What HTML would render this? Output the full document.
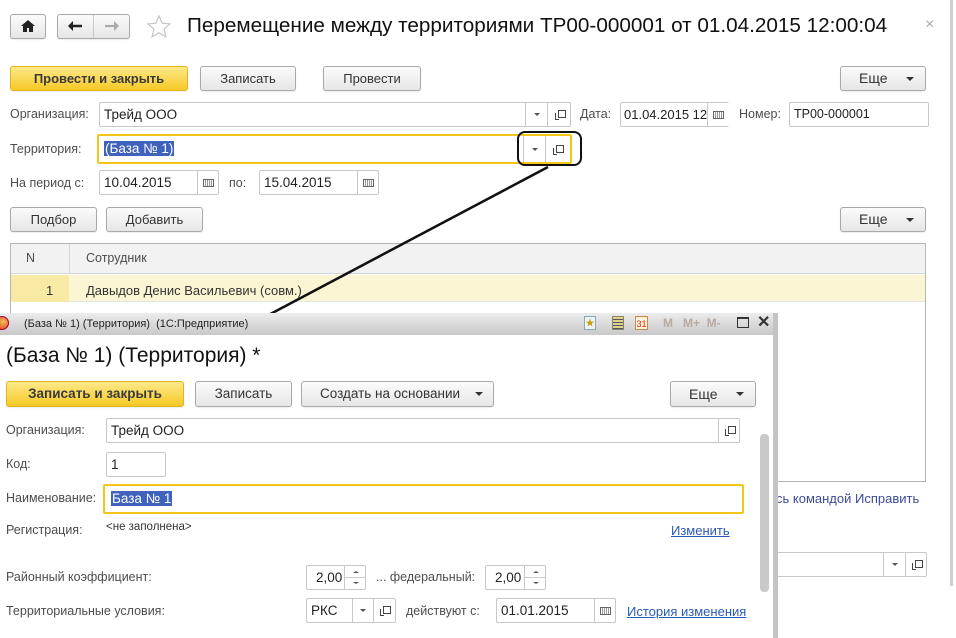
<!DOCTYPE html>
<html><head><meta charset="utf-8">
<style>
*{box-sizing:border-box;margin:0;padding:0}
body{width:956px;height:638px;overflow:hidden;background:#fff;position:relative;font-family:"Liberation Sans","Noto Sans CJK SC",sans-serif;font-size:12.5px;color:#333}
.a{position:absolute}
.btn{position:absolute;border:1px solid #a9a9a9;border-radius:3px;background:linear-gradient(#fbfbfb,#e6e6e6);text-align:center;color:#333;font-size:13px;box-shadow:0 1px 1px rgba(0,0,0,.08)}
.y{background:linear-gradient(#fde98a,#f6c925);border-color:#e0b520;font-weight:bold;color:#3a3a3a}
.inp{position:absolute;border:1px solid #c8c8c8;border-radius:2px;background:#fff;padding-left:4px;color:#222}
.lbl{position:absolute;color:#4d4d4d}
.dd{position:absolute;top:0;bottom:0;border-left:1px solid #c8c8c8}
.tri{position:absolute;width:0;height:0;border-left:4px solid transparent;border-right:4px solid transparent;border-top:4px solid #333}
.tri.s{border-left-width:3px;border-right-width:3px;border-top-width:3px;border-top-color:#555}
.op{position:absolute;width:9px;height:9px}
.op:before{content:"";position:absolute;left:3px;top:0;width:6px;height:6px;border:1px solid #444;background:#fff}
.op:after{content:"";position:absolute;left:0;top:3px;width:3px;height:6px;border-left:1px solid #444;border-bottom:1px solid #444}
.cal{position:absolute;width:11px;height:8px;border:1px solid #666;background:repeating-linear-gradient(90deg,#fff 0 1px,#999 1px 2px)}
.lnk{position:absolute;color:#2a5ab8;text-decoration:underline;font-size:13px}
.sel{background:#3f62bd;color:#fff;padding:0 1px}
</style></head><body>

<div class="a" style="left:950px;top:0;width:3px;height:586px;background:#cfcfcf"></div>

<div class="btn" style="left:10px;top:14px;width:36px;height:25px"><svg width="14" height="12" style="margin-top:5px" viewBox="0 0 14 12"><path d="M7 0L0 6h2v6h4V8h2v4h4V6h2z" fill="#222"/></svg></div>
<div class="btn" style="left:57px;top:14px;width:73px;height:25px"></div>
<div class="a" style="left:93px;top:15px;width:1px;height:23px;background:#c8c8c8"></div>
<svg class="a" style="left:68px;top:21px" width="14" height="10"><path d="M1 5h13" stroke="#222" stroke-width="2.5"/><path d="M0 5l5-5v10z" fill="#222"/></svg>
<svg class="a" style="left:105px;top:21px" width="14" height="10"><path d="M0 5h13" stroke="#aaa" stroke-width="2.2"/><path d="M14 5l-5-5v10z" fill="#aaa"/></svg>
<svg class="a" style="left:147px;top:15px" width="24" height="23"><path d="M12 1l3.2 7.2 7.8.7-5.9 5.2 1.8 7.7L12 17.8 5.1 21.8l1.8-7.7L1 8.9l7.8-.7z" fill="none" stroke="#c4c4c4" stroke-width="1.2"/></svg>
<div class="a" style="left:187px;top:14px;font-size:20.7px;color:#111;white-space:nowrap">Перемещение между территориями ТР00-000001 от 01.04.2015 12:00:04</div>
<div class="a" style="left:925px;top:16px;font-size:16px;color:#aaa">×</div>

<div class="btn y" style="left:10px;top:66px;width:178px;height:25px;line-height:23px">Провести и закрыть</div>
<div class="btn" style="left:200px;top:66px;width:96px;height:25px;line-height:23px">Записать</div>
<div class="btn" style="left:323px;top:66px;width:98px;height:25px;line-height:23px">Провести</div>
<div class="btn" style="left:840px;top:66px;width:86px;height:25px;line-height:23px;text-align:left;padding-left:18px;font-size:14px">Еще<div class="tri" style="left:65px;top:10px"></div></div>

<div class="lbl" style="left:10px;top:107px">Организация:</div>
<div class="inp" style="left:99px;top:102px;width:472px;height:25px;line-height:23px;font-size:13.5px">Трейд ООО
 <div class="dd" style="left:425px;width:22px"><div class="tri s" style="left:8px;top:10px"></div></div>
 <div class="dd" style="left:447px;width:24px"><div class="op" style="left:7px;top:7px"></div></div></div>
<div class="lbl" style="left:580px;top:107px">Дата:</div>
<div class="inp" style="left:620px;top:102px;width:109px;height:25px;line-height:23px;padding-left:3px;font-size:13px">01.04.2015 12
 <div class="dd" style="left:86px;width:22px;background:#fff"><div class="cal" style="left:5px;top:8px"></div></div></div>
<div class="lbl" style="left:739px;top:107px">Номер:</div>
<div class="inp" style="left:789px;top:102px;width:140px;height:25px;line-height:23px">ТР00-000001</div>

<div class="lbl" style="left:10px;top:142px">Территория:</div>
<div class="inp" style="left:97px;top:134px;width:475px;height:30px;border:2px solid #f5c518;line-height:26px;font-size:13.5px;padding-left:5px"><span class="sel">(База № 1)</span>
 <div class="dd" style="left:424px;width:22px"><div class="tri s" style="left:8px;top:12px"></div></div>
 <div class="dd" style="left:446px;width:25px"><div class="op" style="left:7px;top:9px"></div></div></div>
<div class="a" style="left:517px;top:131px;width:65px;height:35px;border:2.5px solid #111;border-radius:8px"></div>

<div class="lbl" style="left:10px;top:176px">На период с:</div>
<div class="inp" style="left:99px;top:170px;width:120px;height:25px;line-height:23px;font-size:13.5px">10.04.2015
 <div class="dd" style="left:97px;width:22px"><div class="cal" style="left:5px;top:8px"></div></div></div>
<div class="lbl" style="left:229px;top:176px">по:</div>
<div class="inp" style="left:259px;top:170px;width:120px;height:25px;line-height:23px;font-size:13.5px">15.04.2015
 <div class="dd" style="left:97px;width:22px"><div class="cal" style="left:5px;top:8px"></div></div></div>

<div class="btn" style="left:10px;top:207px;width:87px;height:25px;line-height:23px">Подбор</div>
<div class="btn" style="left:106px;top:207px;width:97px;height:25px;line-height:23px">Добавить</div>
<div class="btn" style="left:840px;top:207px;width:86px;height:25px;line-height:23px;text-align:left;padding-left:18px;font-size:14px">Еще<div class="tri" style="left:65px;top:10px"></div></div>

<div class="a" style="left:10px;top:243px;width:916px;height:239px;border:1px solid #b5b5b5;background:#fff"></div>
<div class="a" style="left:11px;top:244px;width:914px;height:30px;background:#f2f2f2;border-bottom:1px solid #d5d5d5"></div>
<div class="a" style="left:69px;top:244px;width:1px;height:30px;background:#d8d8d8"></div>
<div class="a" style="left:26px;top:251px;color:#4d4d4d">N</div>
<div class="a" style="left:86px;top:251px;color:#4d4d4d">Сотрудник</div>
<div class="a" style="left:11px;top:275px;width:914px;height:27px;background:#fbf5d3;border-bottom:1px solid #e6e6e6"></div>
<div class="a" style="left:11px;top:275px;width:58px;height:27px;background:#f8e9a4"></div>
<div class="a" style="left:46px;top:283px;color:#333;font-size:13px">1</div>
<div class="a" style="left:86px;top:283px;color:#333;font-size:13px">Давыдов Денис Васильевич (совм.)</div>
<div class="a" style="left:776px;top:491px;color:#3c4a9a;font-size:13px">сь командой Исправить</div>
<div class="inp" style="left:770px;top:552px;width:157px;height:25px">
 <div class="dd" style="left:112px;width:22px"><div class="tri s" style="left:8px;top:10px"></div></div>
 <div class="dd" style="left:134px;width:22px"><div class="op" style="left:6px;top:7px"></div></div></div>

<svg class="a" style="left:0;top:0" width="956" height="638"><path d="M548 167L244 328" stroke="#111" stroke-width="2.5"/></svg>

<div class="a" style="left:0;top:313px;width:778px;height:325px;background:#fff"></div>
<div class="a" style="left:0;top:313px;width:776px;height:22px;background:linear-gradient(#ececec,#c9c9c9)"></div>
<div class="a" style="left:-5px;top:316px;width:14px;height:14px;border-radius:50%;background:radial-gradient(circle at 60% 40%,#f6c05a,#d9301a);border:1px solid #a03"></div>
<div class="a" style="left:24px;top:318px;font-size:11px;color:#222;white-space:nowrap">(База № 1) (Территория)&nbsp; (1С:Предприятие)</div>
<div class="a" style="left:584px;top:316px;width:12px;height:14px;background:#eef3fb;border:1px solid #8aa"><div style="font-size:9px;color:#c90;line-height:12px;text-align:center">★</div></div>
<div class="a" style="left:612px;top:316px;width:12px;height:14px;background:repeating-linear-gradient(#ddd48a 0 2px,#556 2px 3px);border:1px solid #886"></div>
<div class="a" style="left:635px;top:316px;width:13px;height:14px;background:#fff3dd;border:1px solid #c84;color:#d20;font-size:9px;line-height:14px;text-align:center">31</div>
<div class="a" style="left:663px;top:316px;color:#b8aaa0;font-size:12px;font-weight:bold;white-space:nowrap">M&nbsp;&nbsp;&nbsp;M+&nbsp; M-</div>
<div class="a" style="left:737px;top:317px;width:12px;height:11px;border:1.5px solid #333;border-top-width:2.5px"></div>
<div class="a" style="left:757px;top:312px;font-size:16px;font-weight:bold;color:#333">✕</div>
<div class="a" style="left:773px;top:313px;width:5px;height:325px;background:#c4c4c4"></div>

<div class="a" style="left:6px;top:344px;font-size:21px;color:#111;white-space:nowrap">(База № 1) (Территория) *</div>
<div class="btn y" style="left:6px;top:381px;width:178px;height:26px;line-height:24px;font-size:13.5px">Записать и закрыть</div>
<div class="btn" style="left:195px;top:381px;width:97px;height:26px;line-height:24px;font-size:13.5px">Записать</div>
<div class="btn" style="left:301px;top:381px;width:193px;height:26px;line-height:24px;font-size:13.5px;text-align:left;padding-left:18px">Создать на основании<div class="tri" style="left:173px;top:10px"></div></div>
<div class="btn" style="left:670px;top:381px;width:86px;height:26px;line-height:24px;font-size:14px;text-align:left;padding-left:18px">Еще<div class="tri" style="left:65px;top:10px"></div></div>

<div class="lbl" style="left:6px;top:423px">Организация:</div>
<div class="inp" style="left:106px;top:418px;width:634px;height:25px;line-height:23px;font-size:13.5px">Трейд ООО
 <div class="dd" style="left:611px;width:22px"><div class="op" style="left:6px;top:7px"></div></div></div>
<div class="lbl" style="left:6px;top:457px">Код:</div>
<div class="inp" style="left:106px;top:452px;width:60px;height:25px;line-height:23px;font-size:13.5px">1</div>
<div class="lbl" style="left:6px;top:491px">Наименование:</div>
<div class="inp" style="left:103px;top:484px;width:641px;height:30px;border:2px solid #f5c518;line-height:26px;font-size:13.5px;padding-left:6px"><span class="sel">База № 1</span></div>
<div class="lbl" style="left:6px;top:523px">Регистрация:</div>
<div class="a" style="left:106px;top:521px;font-size:11.5px;color:#333">&lt;не заполнена&gt;</div>
<div class="lnk" style="left:671px;top:523px">Изменить</div>

<div class="lbl" style="left:6px;top:570px">Районный коэффициент:</div>
<div class="inp" style="left:306px;top:565px;width:60px;height:25px;line-height:23px;font-size:13.5px;padding-left:9px">2,00
 <div class="dd" style="left:37px;width:22px"><div style="position:absolute;left:0;right:0;top:11px;border-top:1px solid #ccc"></div><div class="tri s" style="left:8px;top:5px;border-top:none;border-bottom:2px solid #555"></div><div class="tri s" style="left:8px;top:16px;border-top-width:2px"></div></div></div>
<div class="lbl" style="left:376px;top:570px">... федеральный:</div>
<div class="inp" style="left:485px;top:565px;width:61px;height:25px;line-height:23px;font-size:13.5px;padding-left:9px">2,00
 <div class="dd" style="left:38px;width:22px"><div style="position:absolute;left:0;right:0;top:11px;border-top:1px solid #ccc"></div><div class="tri s" style="left:8px;top:5px;border-top:none;border-bottom:2px solid #555"></div><div class="tri s" style="left:8px;top:16px;border-top-width:2px"></div></div></div>

<div class="lbl" style="left:6px;top:604px">Территориальные условия:</div>
<div class="inp" style="left:306px;top:598px;width:90px;height:25px;line-height:23px;font-size:13.5px">РКС
 <div class="dd" style="left:45px;width:21px"><div class="tri s" style="left:7px;top:10px"></div></div>
 <div class="dd" style="left:66px;width:23px"><div class="op" style="left:6px;top:7px"></div></div></div>
<div class="lbl" style="left:406px;top:604px">действуют с:</div>
<div class="inp" style="left:496px;top:598px;width:120px;height:25px;line-height:23px;font-size:13.5px">01.01.2015
 <div class="dd" style="left:97px;width:22px"><div class="cal" style="left:5px;top:8px"></div></div></div>
<div class="lnk" style="left:627px;top:604px">История изменения</div>

<div class="a" style="left:760px;top:434px;width:9px;height:158px;background:#c9c9c9;border-radius:4px"></div>
</body></html>
